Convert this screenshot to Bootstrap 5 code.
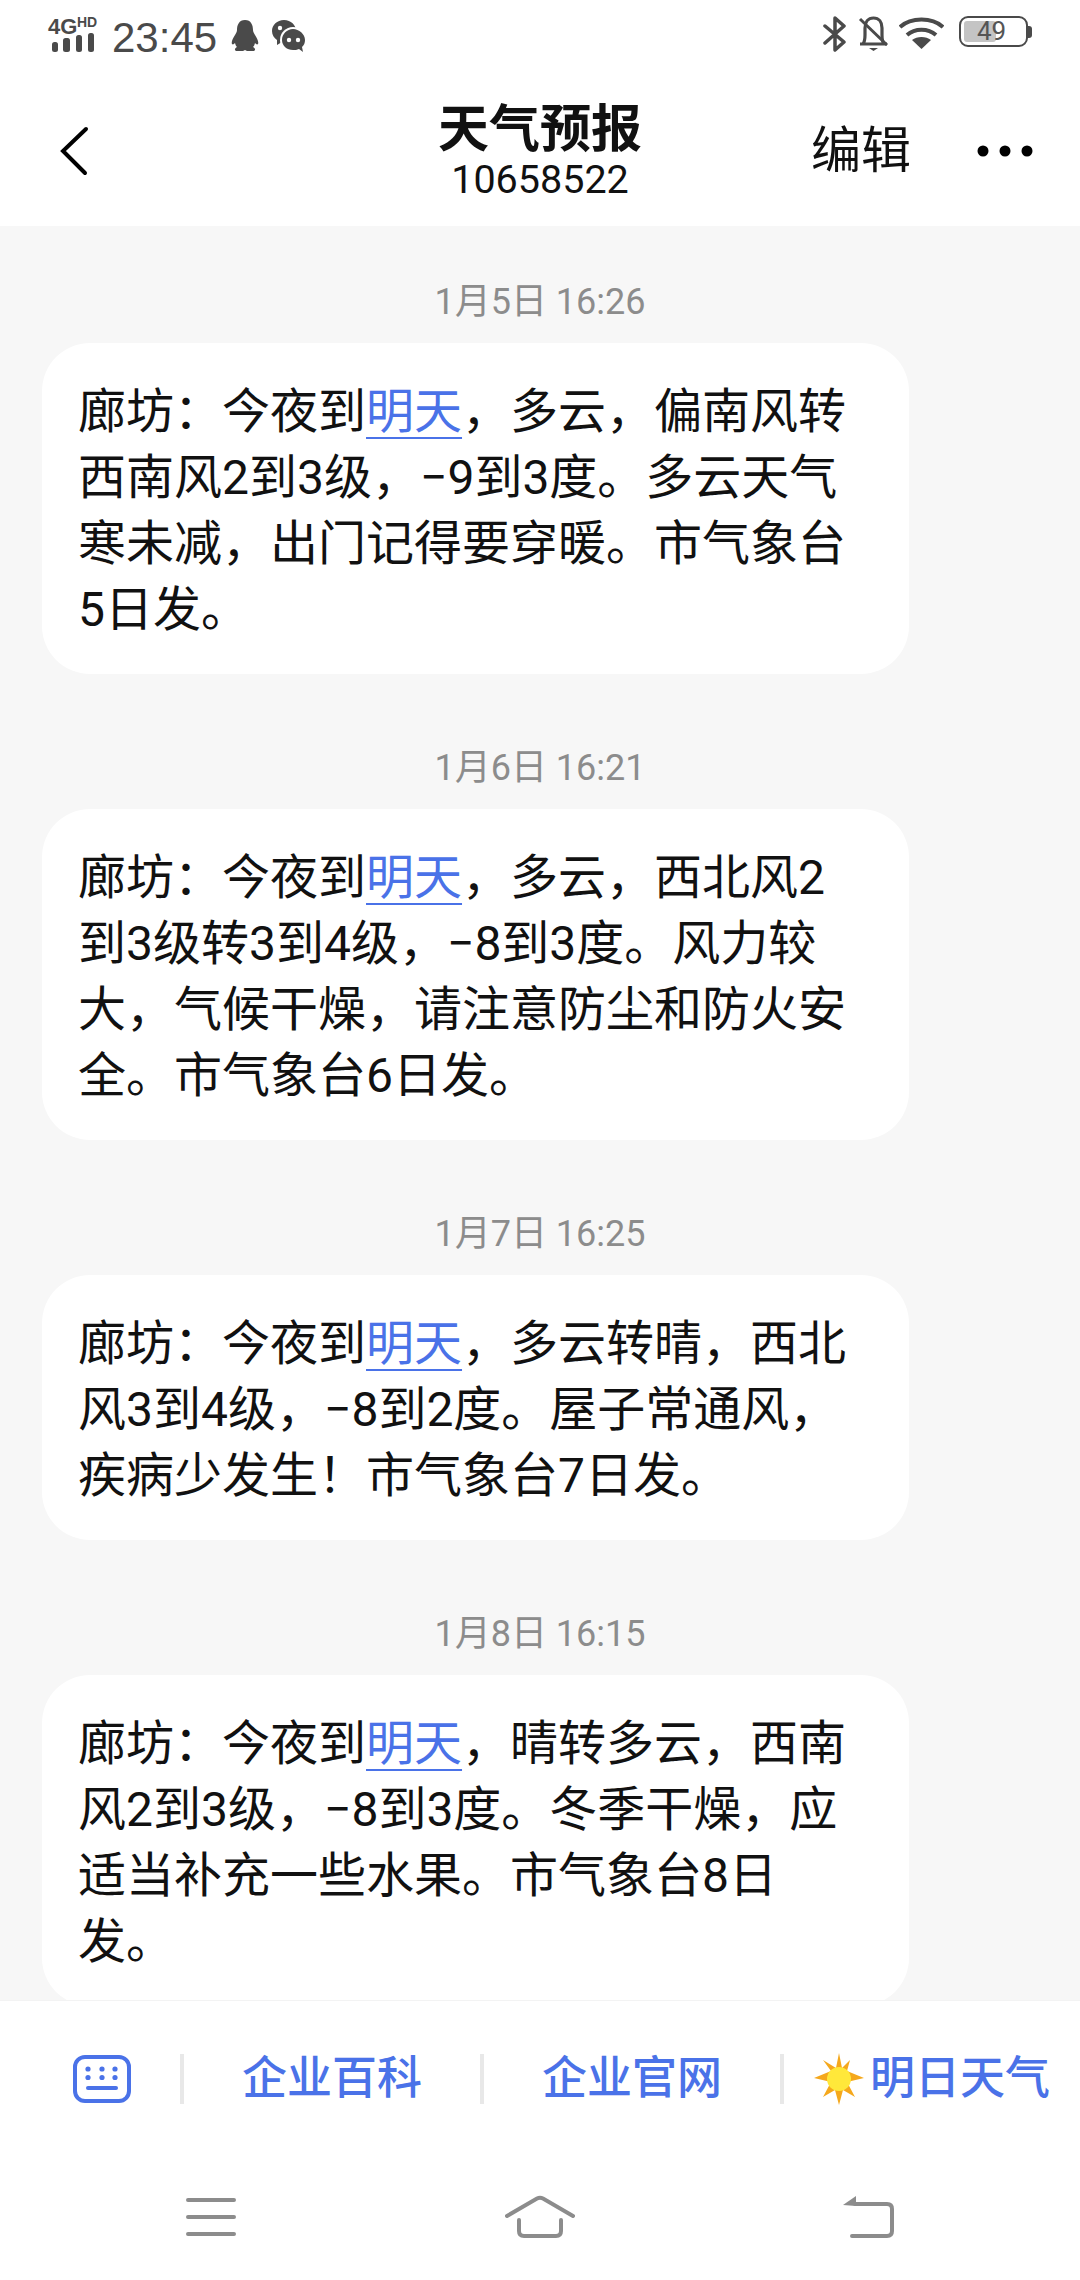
<!DOCTYPE html>
<html lang="zh-CN">
<head>
    <meta charset="UTF-8">
    <meta name="viewport" content="width=device-width, initial-scale=1.0">
    <link href="https://cdn.jsdelivr.net/npm/bootstrap@5.3.3/dist/css/bootstrap.min.css" rel="stylesheet" />
    <title>天气预报</title>
    <style>
        html, body { margin: 0; }
        body { width: 1080px; height: 2280px; font-family: Roboto, "Noto Sans CJK SC", sans-serif; background: #fff; }
        svg { display: block; flex: none; }
        .phone-screen { width: 1080px; height: 2280px; }

        .status-bar { height: 70px; padding: 16px 48px 0 48px; color: #4a4a4a; }
        .status-signal { margin: -7px -2px 0 -2px; }
        .status-time { font-family: "Liberation Sans", sans-serif; font-size: 42px; line-height: 35px; margin: 4px 14px 0 13px; }
        .status-penguin { margin-top: 4px; }
        .status-wechat { margin: 4px 0 0 13px; }
        .status-bell { margin-left: 11px; }
        .status-wifi { margin-left: 10px; }
        .status-battery { margin-left: 15px; }
        .battery-box { width: 69px; height: 31px; border: 2.5px solid #4a4a4a; border-radius: 9px; position: relative; }
        .battery-fill { position: absolute; left: 3px; top: 3px; bottom: 3px; background: #c4c4c4; border-radius: 3px; }
        .battery-num { position: absolute; left: 16px; top: 0; font-size: 26px; line-height: 26px; color: #555; }
        .battery-tip { width: 4px; height: 12px; background: #4a4a4a; border-radius: 0 3px 3px 0; }

        .top-bar { height: 156px; padding-top: 6px; }
        .top-side { width: 300px; }
        .top-center { width: 480px; }
        .top-title { font-size: 51px; line-height: 60px; font-weight: 700; color: #111; margin-top: -2px; }
        .top-number { font-size: 39.500px; line-height: 40px; color: #111; }
        .top-edit { font-size: 50px; line-height: 60px; color: #111; margin-right: 66px; }
        .back-cell { padding-left: 60px; }
        .more-cell { padding-right: 47px; }

        .chat-area { background: #f7f7f7; padding-top: 51px; border-bottom: 1px solid #f3f3f3; }
        .chat-date { font-size: 36px; line-height: 50px; color: #8c8c8c; text-align: center; margin-bottom: 16px; }
        .chat-bubble { width: 867px; margin: 0 0 69px 42px; padding: 36px 36px 31px 36px; background: #fff; border-radius: 48px; font-size: 48px; line-height: 66px; color: #111; white-space: nowrap; }
        .chat-link { color: #4a72e8; text-decoration: underline; text-decoration-thickness: 2px; text-underline-offset: 9px; text-decoration-skip-ink: none; }

        .menu-row { height: 158px; padding-bottom: 2px; }
        .menu-key { width: 180px; padding-left: 73px; }
        .menu-sep { width: 4px; height: 50px; background: #e8e8e8; }
        .menu-cell { width: 296px; font-size: 45px; line-height: 50px; font-weight: 500; color: #4a72e8; gap: 6px; }
        .nav-row { height: 121px; padding: 0 186px 6px 186px; }
    </style>
</head>
<body>
    <div class="phone-screen d-flex flex-column overflow-hidden">

        <div class="status-bar d-flex align-items-start flex-shrink-0">
            <svg class="status-signal" width="55" height="44" viewBox="-2 -8 55 44" fill="#4a4a4a">
                <text x="0" y="17" font-family="Liberation Sans" font-weight="700" font-size="22">4G</text>
                <text x="29" y="10" font-family="Liberation Sans" font-weight="700" font-size="14">HD</text>
                <rect x="4" y="25" width="6" height="10" rx="2.500"/>
                <rect x="15" y="21" width="7" height="14" rx="2.500"/>
                <rect x="28" y="18" width="6" height="17" rx="2.500"/>
                <rect x="40" y="16" width="6" height="19" rx="2.500"/>
            </svg>
            <span class="status-time">23:45</span>
            <svg class="status-penguin" width="28" height="32" viewBox="0 0 28 32" fill="#4a4a4a">
                <path d="M14 0C8 0 6 5 6 10C6 12 5 13 4 15C2 18 0 22 1 24C2 25 3 24 4 23C4.500 25 5 26 6 27C4 28 3 30 5 31H12L14 30L16 31H23C25 30 24 28 22 27C23 26 23.500 25 24 23C25 24 26 25 27 24C28 22 26 18 24 15C23 13 22 12 22 10C22 5 20 0 14 0Z"/>
            </svg>
            <svg class="status-wechat" width="33" height="32" viewBox="0 0 33 32">
                <path fill="#4a4a4a" d="M12 0C5 0 0 5 0 11C0 15 2 18 5 20L5 25L10 22C16 23 24 18 24 11C24 5 19 0 12 0Z"/>
                <circle cx="21" cy="20" r="13" fill="#fff"/>
                <path fill="#4a4a4a" d="M21 9C15 9 10 14 10 20C10 26 15 30 21 30C23 30 25 30 27 29L31 32L30 27C32 25 33 23 33 20C33 14 27 9 21 9Z"/>
                <circle cx="8" cy="8" r="2.200" fill="#fff"/>
                <circle cx="17" cy="20" r="2.200" fill="#fff"/>
                <circle cx="26" cy="20" r="2.200" fill="#fff"/>
            </svg>

            <div class="ms-auto d-flex align-items-start">
                <svg width="24" height="36" viewBox="0 0 24 36" fill="none" stroke="#4a4a4a" stroke-width="3.500" stroke-linejoin="round" stroke-linecap="round">
                    <path d="M2 10L21 26L12 34V2L21 10L2 27"/>
                </svg>
                <svg class="status-bell" width="31" height="36" viewBox="0 0 31 36" fill="none" stroke="#4a4a4a" stroke-width="3.200">
                    <path d="M2 28H29M5 28C7 25 7 22 7 19V12C7 6 10 2 15.500 2C21 2 24 6 24 12V19C24 22 24 25 26 28"/>
                    <path d="M2 3L29 29" stroke-width="3"/>
                    <path d="M11 32H20L15.500 35Z" fill="#4a4a4a" stroke="none"/>
                </svg>
                <svg class="status-wifi" width="45" height="33" viewBox="0 0 45 33" fill="none" stroke="#4a4a4a" stroke-width="4">
                    <path d="M1 11C12 1 33 1 44 11"/>
                    <path d="M8 19C16 12 29 12 37 19"/>
                    <path d="M13 24C18 20 27 20 32 24L22.500 33Z" fill="#4a4a4a" stroke="none"/>
                </svg>
                <div class="status-battery d-flex align-items-center">
                    <div class="battery-box">
                        <div class="battery-fill" style="width: 49%"></div>
                        <span class="battery-num">49</span>
                    </div>
                    <div class="battery-tip"></div>
                </div>
            </div>
        </div>

        <div class="top-bar d-flex align-items-center flex-shrink-0">
            <div class="top-side back-cell">
                <svg width="30" height="50" viewBox="0 0 30 50" fill="none" stroke="#000" stroke-width="4" stroke-linecap="round">
                    <path d="M26 3L3 25L25 47"/>
                </svg>
            </div>
            <div class="top-center text-center">
                <div class="top-title">天气预报</div>
                <div class="top-number">10658522</div>
            </div>
            <div class="top-side more-cell d-flex align-items-center justify-content-end">
                <span class="top-edit">编辑</span>
                <svg width="56" height="12" viewBox="0 0 56 12" fill="#000">
                    <circle cx="6" cy="6" r="5.500"/>
                    <circle cx="28" cy="6" r="5.500"/>
                    <circle cx="50" cy="6" r="5.500"/>
                </svg>
            </div>
        </div>

        <div class="chat-area flex-grow-1 overflow-hidden">
            <div class="chat-date">1月5日 16:26</div>
            <div class="chat-bubble">廊坊&#xFF1A;今夜到<span class="chat-link">明天</span>&#xFF0C;多云&#xFF0C;偏南风转<br>西南风2到3级&#xFF0C;&#x2212;9到3度。多云天气<br>寒未减&#xFF0C;出门记得要穿暖。市气象台<br>5日发。</div>

            <div class="chat-date">1月6日 16:21</div>
            <div class="chat-bubble">廊坊&#xFF1A;今夜到<span class="chat-link">明天</span>&#xFF0C;多云&#xFF0C;西北风2<br>到3级转3到4级&#xFF0C;&#x2212;8到3度。风力较<br>大&#xFF0C;气候干燥&#xFF0C;请注意防尘和防火安<br>全。市气象台6日发。</div>

            <div class="chat-date">1月7日 16:25</div>
            <div class="chat-bubble">廊坊&#xFF1A;今夜到<span class="chat-link">明天</span>&#xFF0C;多云转晴&#xFF0C;西北<br>风3到4级&#xFF0C;&#x2212;8到2度。屋子常通风&#xFF0C;<br>疾病少发生&#xFF01;市气象台7日发。</div>

            <div class="chat-date">1月8日 16:15</div>
            <div class="chat-bubble">廊坊&#xFF1A;今夜到<span class="chat-link">明天</span>&#xFF0C;晴转多云&#xFF0C;西南<br>风2到3级&#xFF0C;&#x2212;8到3度。冬季干燥&#xFF0C;应<br>适当补充一些水果。市气象台8日<br>发。</div>
        </div>

        <div class="menu-row d-flex align-items-center flex-shrink-0 bg-white">
            <div class="menu-key">
                <svg width="58" height="48" viewBox="0 0 58 48" fill="#4a72e8">
                    <rect x="2" y="2" width="54" height="44" rx="10" fill="none" stroke="#4a72e8" stroke-width="4"/>
                    <circle cx="15" cy="14" r="2.600"/><circle cx="29" cy="14" r="2.600"/><circle cx="42" cy="14" r="2.600"/>
                    <circle cx="15" cy="22.500" r="2.600"/><circle cx="29" cy="22.500" r="2.600"/><circle cx="42" cy="22.500" r="2.600"/>
                    <rect x="13" y="31" width="32" height="4" rx="2"/>
                </svg>
            </div>
            <div class="menu-sep"></div>
            <div class="menu-cell d-flex justify-content-center align-items-center">企业百科</div>
            <div class="menu-sep"></div>
            <div class="menu-cell d-flex justify-content-center align-items-center">企业官网</div>
            <div class="menu-sep"></div>
            <div class="menu-cell d-flex justify-content-center align-items-center">
                <svg width="50" height="52" viewBox="0 0 50 52">
                    <path fill="#f5a81c" d="M25 0L28 15L36 7L33 18L50 25L33 29L41 44L29 37L25 52L21 37L9 44L17 29L0 25L17 18L9 7L22 15Z"/>
                    <circle cx="25" cy="26" r="12" fill="#ffe83a"/>
                </svg>
                <span>明日天气</span>
            </div>
        </div>

        <div class="nav-row d-flex justify-content-between align-items-center flex-shrink-0 bg-white">
            <svg width="50" height="38" viewBox="0 0 50 38" fill="none" stroke="#8c8c8c" stroke-width="4" stroke-linecap="round">
                <path d="M2 2H48M2 19H48M2 36H48"/>
            </svg>
            <svg width="70" height="44" viewBox="0 0 70 44" fill="none" stroke="#8c8c8c" stroke-width="4" stroke-linecap="round">
                <path d="M2 21L32 3.500Q35 2 38 3.500L68 21"/>
                <path d="M14 25V36Q14 41 19 41H51Q56 41 56 36V25"/>
            </svg>
            <svg width="51" height="42" viewBox="0 0 51 42" fill="none" stroke="#8c8c8c" stroke-width="4" stroke-linecap="round">
                <path d="M12 8H44Q49 8 49 13V35Q49 40 44 40H9"/>
                <path d="M0 9L13 0V10Z" fill="#8c8c8c" stroke="none"/>
            </svg>
        </div>
    </div>

    <script src="https://cdn.jsdelivr.net/npm/bootstrap@5.3.3/dist/js/bootstrap.bundle.min.js"></script>
</body>
</html>
